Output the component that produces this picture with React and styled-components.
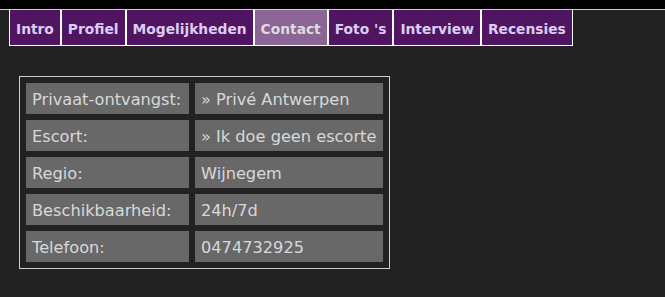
import React from 'react'
import styled, { createGlobalStyle } from 'styled-components';

/**** Styles ****/
const GlobalStyle = createGlobalStyle`
  html, body {
    margin: 0;
    padding: 0;
    background: #222222;
  }
  body {
    font-family: "DejaVu Sans", Verdana, sans-serif;
  }
`

const Page = styled.div`
  min-height: 297px;
  background: #222222;
`

const TopBar = styled.div`
  height: 9px;
  background: #000;
  border-bottom: 1px solid #cfcfcf;
`

const Tabs = styled.nav`
  display: flex;
  padding-left: 9px;
`

const Tab = styled.a`
  display: flex;
  align-items: center;
  height: 36px;
  padding: 2px 6px 0;
  box-sizing: border-box;
  border: 1px solid #fff;
  border-top: 0;
  background: ${p => p.active ? '#8b6595' : '#4f1561'};
  color: ${p => p.active ? '#dcdcdc' : '#dccdf2'};
  font-size: 13.8px;
  font-weight: bold;
  text-decoration: none;
  white-space: nowrap;
`

const Box = styled.div`
  display: inline-grid;
  grid-template-columns: 163px 188px;
  gap: 6px;
  padding: 6px;
  margin: 30px 0 0 19px;
  border: 1px solid #cfcfcf;
`

const Cell = styled.div`
  height: 31px;
  box-sizing: border-box;
  padding: 1px 6px 0;
  display: flex;
  align-items: center;
  background: #686868;
  color: #d8d8d8;
  font-size: 16.2px;
  white-space: nowrap;
  overflow: hidden;
`

/**** Data ****/
const tabs = ['Intro', 'Profiel', 'Mogelijkheden', 'Contact', "Foto 's", 'Interview', 'Recensies'];

const rows = [
  ['Privaat-ontvangst:', '» Privé Antwerpen'],
  ['Escort:', '» Ik doe geen escorte'],
  ['Regio:', 'Wijnegem'],
  ['Beschikbaarheid:', '24h/7d'],
  ['Telefoon:', '0474732925'],
];

/**** Component ****/
const App = () => {
  return (<Page>
    <GlobalStyle/>
    <TopBar/>
    <Tabs>
      {tabs.map(t => <Tab key={t} active={t === 'Contact'}>{t}</Tab>)}
    </Tabs>
    <Box>
      {rows.map(([label, value]) => (
        <React.Fragment key={label}>
          <Cell>{label}</Cell>
          <Cell>{value}</Cell>
        </React.Fragment>
      ))}
    </Box>
  </Page>)
}

export default App;
